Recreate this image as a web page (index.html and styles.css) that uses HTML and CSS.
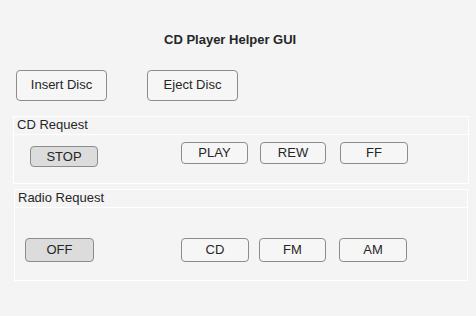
FILE: index.html
```html
<!DOCTYPE html>
<html lang="en">
<head>
    <meta charset="UTF-8">
    <title>CD Player Helper GUI</title>
    <link rel="stylesheet" href="styles.css">
</head>
<body>

    <h1 class="title">CD Player Helper GUI</h1>

    <div class="disc-row">
        <button class="btn btn-disc">Insert Disc</button>
        <button class="btn btn-disc btn-eject">Eject Disc</button>
    </div>

    <!-- CD Request -->
    <div class="panel panel-cd">
        <div class="panel-head">CD Request</div>
        <div class="panel-body">
            <button class="btn btn-on btn-stop">STOP</button>
            <button class="btn btn-play">PLAY</button>
            <button class="btn btn-rew">REW</button>
            <button class="btn btn-ff">FF</button>
        </div>
    </div>

    <!-- Radio Request -->
    <div class="panel panel-radio">
        <div class="panel-head">Radio Request</div>
        <div class="panel-body">
            <button class="btn btn-on btn-off">OFF</button>
            <button class="btn btn-cd">CD</button>
            <button class="btn btn-fm">FM</button>
            <button class="btn btn-am">AM</button>
        </div>
    </div>

</body>
</html>
```

FILE: styles.css
```css
* {
    margin: 0;
    padding: 0;
    box-sizing: border-box;
}

body {
    background-color: #f4f4f4;
    color: #262626;
    font-family: "Liberation Sans", Arial, sans-serif;
    font-size: 13px;
}

.title {
    font-size: 13px;
    font-weight: bold;
    line-height: 15px;
    padding: 32px 0 0 164px;
}

/* Botones generales */
.btn {
    font-family: inherit;
    font-size: 13px;
    color: #262626;
    background-color: #f6f6f6;
    border: 1px solid #8c8c8c;
    border-radius: 4px;
    line-height: 1;
    padding-bottom: 1px;
}

.btn-on {
    background-color: #dcdcdc;
}

.disc-row {
    display: flex;
    margin-top: 23px;
    padding-left: 16px;
}

.btn-disc {
    width: 91px;
    height: 31px;
    padding-bottom: 2px;
}

.btn-eject {
    margin-left: 40px;
}

/* Paneles */
.panel {
    border: 1px solid #ffffff;
}

.panel-cd {
    margin: 15px 0 0 13px;
    width: 456px;
}

.panel-radio {
    margin: 5px 0 0 14px;
    width: 454px;
}

.panel-head {
    height: 18px;
    line-height: 16px;
    padding-left: 3px;
    border-bottom: 1px solid #ffffff;
}

.panel-body {
    display: flex;
    align-items: flex-start;
}

.panel-cd .panel-body {
    height: 48px;
}

.panel-radio .panel-body {
    height: 72px;
}

.btn-stop {
    width: 68px;
    height: 21px;
    margin: 11px 0 0 16px;
}

.btn-play,
.btn-rew,
.btn-ff {
    height: 22px;
    margin-top: 7px;
}

.btn-play {
    width: 67px;
    margin-left: 83px;
}

.btn-rew {
    width: 66px;
    margin-left: 12px;
}

.btn-ff {
    width: 68px;
    margin-left: 14px;
}

.panel-radio .btn {
    height: 24px;
    margin-top: 30px;
}

.btn-off {
    width: 69px;
    margin-left: 10px;
}

.btn-cd {
    width: 68px;
    margin-left: 87px;
}

.btn-fm {
    width: 67px;
    margin-left: 10px;
}

.btn-am {
    width: 68px;
    margin-left: 13px;
}
```
